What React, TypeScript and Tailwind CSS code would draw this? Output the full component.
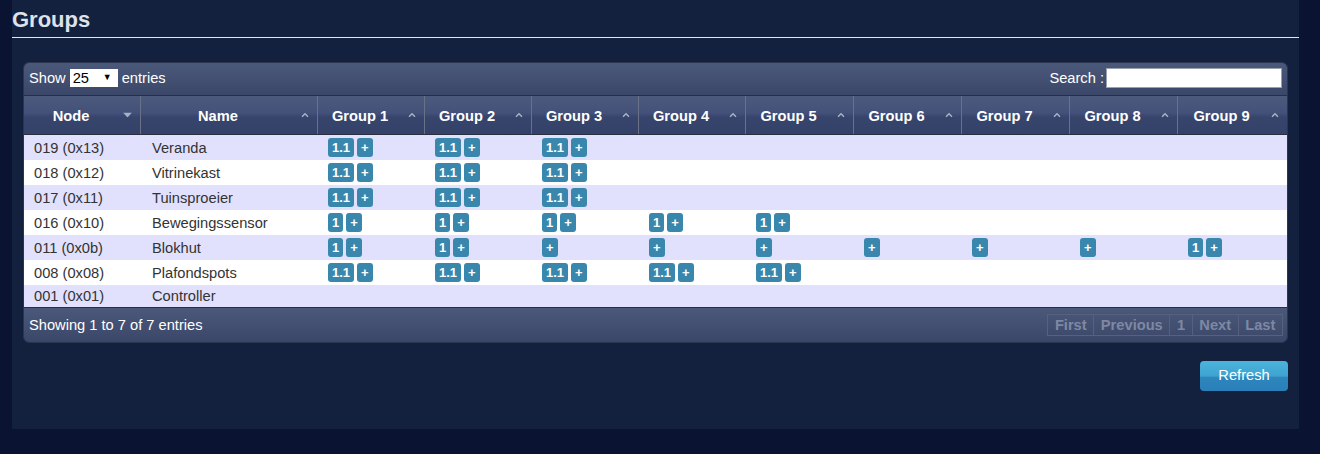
import React from "react";

const groups = ["Group 1", "Group 2", "Group 3", "Group 4", "Group 5", "Group 6", "Group 7", "Group 8", "Group 9"];

type Row = { node: string; name: string; g: (string | null)[] };
const rows: Row[] = [
  { node: "019 (0x13)", name: "Veranda", g: ["1.1", "1.1", "1.1", null, null, null, null, null, null] },
  { node: "018 (0x12)", name: "Vitrinekast", g: ["1.1", "1.1", "1.1", null, null, null, null, null, null] },
  { node: "017 (0x11)", name: "Tuinsproeier", g: ["1.1", "1.1", "1.1", null, null, null, null, null, null] },
  { node: "016 (0x10)", name: "Bewegingssensor", g: ["1", "1", "1", "1", "1", null, null, null, null] },
  { node: "011 (0x0b)", name: "Blokhut", g: ["1", "1", "", "", "", "", "", "", "1"] },
  { node: "008 (0x08)", name: "Plafondspots", g: ["1.1", "1.1", "1.1", "1.1", "1.1", null, null, null, null] },
  { node: "001 (0x01)", name: "Controller", g: [null, null, null, null, null, null, null, null, null] },
];

function Badge({ children }: { children: React.ReactNode }) {
  return (
    <span className="inline-flex h-[19px] min-w-[15px] items-center justify-center rounded-[3px] bg-[#3a87ad] px-[4px] text-[13px] font-bold leading-none text-white">
      {children}
    </span>
  );
}

function SortIcon({ down }: { down?: boolean }) {
  if (down) {
    return (
      <svg width="9" height="5" viewBox="0 0 9 5" className="absolute right-[8px] top-1/2 -translate-y-1/2">
        <path d="M0 0 L9 0 L4.5 5 Z" fill="#a8b0c4" />
      </svg>
    );
  }
  return (
    <svg width="8" height="5" viewBox="0 0 8 5" className="absolute right-[8px] top-1/2 -translate-y-1/2">
      <path d="M1 4.2 L4 1.2 L7 4.2" fill="none" stroke="#a8b0c4" strokeWidth="1.5" />
    </svg>
  );
}

const cols = "grid grid-cols-[117px_177px_107px_107px_107px_107px_108px_108px_108px_108px_1fr]";

export default function App() {
  return (
    <div
      className="min-h-[454px] w-[1320px] bg-[#0b1333]"
      style={{ fontFamily: '"Liberation Sans", Arial, sans-serif' }}
    >
      <div className="ml-[12px] h-[429px] w-[1287px] bg-[#13213e]">
        <h1 className="pt-[7px] text-[22px] font-bold leading-[26px] text-[#dfe2ea]">Groups</h1>
        <div className="mt-[4px] h-px w-full bg-[#e6e8ee]" />

        <div className="ml-[11px] mt-[24px] w-[1265px] overflow-hidden rounded-[6px] border border-[#2b3550]">
          {/* top bar */}
          <div className="flex h-[32px] items-center justify-between bg-[linear-gradient(180deg,#4a5879_0%,#434f71_55%,#3a4768_100%)] pb-[3px] pl-[5px] pr-[5px] text-[14.67px] text-white">
            <div className="flex items-center">
              <span>Show</span>
              <span className="ml-[4px] flex h-[18px] w-[48px] items-center justify-between bg-white pl-[3px] pr-[6px] text-[14.67px] text-black">
                <span>25</span>
                <span className="text-[9px]">▼</span>
              </span>
              <span className="ml-[4px]">entries</span>
            </div>
            <div className="flex items-center">
              <span>Search :</span>
              <span className="ml-[2px] h-[20px] w-[176px] border border-[#9aa0ad] bg-white" />
            </div>
          </div>

          {/* header */}
          <div className={`${cols} h-[40px] border-y border-[#2a2f3e] bg-[linear-gradient(180deg,#4b5a7c_0%,#43517a_45%,#37456c_55%,#34426a_100%)]`}>
            {["Node", "Name", ...groups].map((h, i) => (
              <div
                key={h}
                className={`relative flex items-center justify-center pr-[22px] pt-[1px] text-[14.67px] font-bold text-white ${i < 10 ? "border-r border-[#6a7186]" : ""}`}
              >
                {h}
                <SortIcon down={i === 0} />
              </div>
            ))}
          </div>

          {/* body */}
          <div>
            {rows.map((r, ri) => (
              <div
                key={r.node}
                className={`${cols} ${ri % 2 === 0 ? "bg-[#e1e1fd]" : "bg-white"} text-[14.67px] text-[#333333]`}
              >
                <div className="flex items-center py-[3px] pl-[10px] leading-[16px]">{r.node}</div>
                <div className="flex items-center py-[3px] pl-[11px] leading-[16px]">{r.name}</div>
                {r.g.map((v, gi) => (
                  <div key={gi} className="flex items-center gap-[3px] py-[3px] pl-[10px]">
                    {v === null ? null : (
                      <>
                        {v !== "" && <Badge>{v}</Badge>}
                        <Badge>+</Badge>
                      </>
                    )}
                  </div>
                ))}
              </div>
            ))}
          </div>

          {/* footer */}
          <div className="flex h-[35px] items-center justify-between border-t border-[#2a2f3e] bg-[linear-gradient(180deg,#4a5879_0%,#434f71_55%,#3a4768_100%)] pl-[5px] pr-[4px] text-[14.67px] text-white">
            <span>Showing 1 to 7 of 7 entries</span>
            <div className="flex h-[22px] text-[14.67px] font-bold text-[#7e88a2]">
              {["First", "Previous", "1", "Next", "Last"].map((p, i) => (
                <span
                  key={p}
                  className={`flex items-center border border-[#56617e] px-[6.6px] ${i > 0 ? "border-l-0" : ""}`}
                >
                  {p}
                </span>
              ))}
            </div>
          </div>
        </div>

        <div className="mr-[11px] mt-[18px] flex justify-end">
          <button className="h-[30px] w-[88px] rounded-[4px] bg-[linear-gradient(180deg,#4bb4dc_0%,#3ea3d0_50%,#2e86bd_55%,#2a7fb8_100%)] pb-[2px] text-[14.67px] text-white">
            Refresh
          </button>
        </div>
      </div>
    </div>
  );
}
